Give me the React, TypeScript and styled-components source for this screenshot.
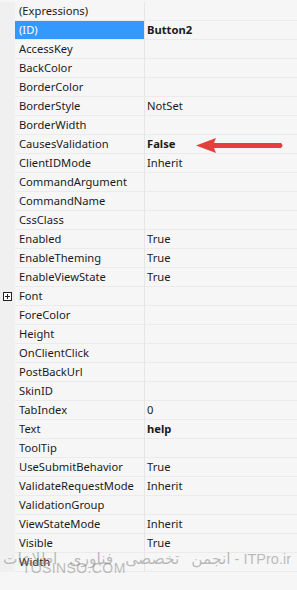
import React from "react";
import styled, { createGlobalStyle } from "styled-components";

const Global = createGlobalStyle`
  html, body { margin: 0; padding: 0; background: #f6f6f6; }
  body { font-family: "Noto Sans", "Liberation Sans", sans-serif; }
`;

const Grid = styled.div`
  position: relative;
  width: 297px;
  height: 590px;
  overflow: hidden;
  background: #f6f6f6;
  padding-top: 2px;
  box-sizing: border-box;
`;

const Row = styled.div`
  display: grid;
  grid-template-columns: 15px 129px 1px 1fr;
  height: 18px;
  border-bottom: 1px solid #ebebeb;
  font-size: 11.2px;
  color: #1b1b1b;
  line-height: 18px;
`;

const Gutter = styled.div`
  background: #f0f0f0;
  display: flex;
  align-items: center;
  justify-content: center;
  margin-bottom: -1px;
`;

const Name = styled.div<{ $selected?: boolean }>`
  padding-left: 4px;
  white-space: nowrap;
  overflow: hidden;
  background: ${(p) => (p.$selected ? "#3399ff" : "transparent")};
  color: ${(p) => (p.$selected ? "#ffffff" : "#1b1b1b")};
`;

const Divider = styled.div`
  background: #e6e6e6;
  margin-bottom: -1px;
`;

const Value = styled.div<{ $bold?: boolean }>`
  padding-left: 2px;
  white-space: nowrap;
  font-weight: ${(p) => (p.$bold ? 700 : 400)};
`;

const Expander = styled.div`
  width: 7px;
  height: 7px;
  border: 1px solid #222;
  position: relative;
  background: #fff;
  margin-right: 1px;
  &::before {
    content: "";
    position: absolute;
    left: 1px;
    right: 1px;
    top: 3px;
    height: 1px;
    background: #222;
  }
  &::after {
    content: "";
    position: absolute;
    top: 1px;
    bottom: 1px;
    left: 3px;
    width: 1px;
    background: #222;
  }
`;

const Arrow = styled.svg`
  position: absolute;
  left: 194px;
  top: 136px;
`;

const Watermark = styled.div`
  position: absolute;
  left: 0;
  right: 6px;
  top: 550px;
  display: flex;
  justify-content: flex-end;
  align-items: baseline;
  overflow: hidden;
  white-space: nowrap;
  font-family: "DejaVu Sans", "Noto Sans", sans-serif;
  color: rgba(125, 125, 125, 0.5);
`;

const Persian = styled.span`
  flex-shrink: 0;
  font-size: 15.5px;
  word-spacing: 7px;
`;

const Latin = styled.span`
  flex-shrink: 0;
  font-family: "Liberation Sans", sans-serif;
  font-size: 14.5px;
`;

const Watermark2 = styled.div`
  position: absolute;
  left: 22px;
  top: 560px;
  font-family: "Liberation Sans", sans-serif;
  font-size: 14px;
  letter-spacing: 0.4px;
  color: rgba(125, 125, 125, 0.5);
`;

type P = { name: string; value?: string; bold?: boolean; selected?: boolean; expand?: boolean };

const rows: P[] = [
  { name: "(Expressions)" },
  { name: "(ID)", value: "Button2", bold: true, selected: true },
  { name: "AccessKey" },
  { name: "BackColor" },
  { name: "BorderColor" },
  { name: "BorderStyle", value: "NotSet" },
  { name: "BorderWidth" },
  { name: "CausesValidation", value: "False", bold: true },
  { name: "ClientIDMode", value: "Inherit" },
  { name: "CommandArgument" },
  { name: "CommandName" },
  { name: "CssClass" },
  { name: "Enabled", value: "True" },
  { name: "EnableTheming", value: "True" },
  { name: "EnableViewState", value: "True" },
  { name: "Font", expand: true },
  { name: "ForeColor" },
  { name: "Height" },
  { name: "OnClientClick" },
  { name: "PostBackUrl" },
  { name: "SkinID" },
  { name: "TabIndex", value: "0" },
  { name: "Text", value: "help", bold: true },
  { name: "ToolTip" },
  { name: "UseSubmitBehavior", value: "True" },
  { name: "ValidateRequestMode", value: "Inherit" },
  { name: "ValidationGroup" },
  { name: "ViewStateMode", value: "Inherit" },
  { name: "Visible", value: "True" },
  { name: "Width" },
];

export default function App() {
  return (
    <>
      <Global />
      <Grid>
        {rows.map((r) => (
          <Row key={r.name}>
            <Gutter>{r.expand && <Expander />}</Gutter>
            <Name $selected={r.selected}>{r.name}</Name>
            <Divider />
            <Value $bold={r.bold}>{r.value ?? ""}</Value>
          </Row>
        ))}
        <Arrow width="92" height="20" viewBox="0 0 92 20">
          <path d="M2 9.5 L22 2 L20 7 L87 7 Q90 9.5 87 12 L20 12 L22 17 Z" fill="#e2403d" />
        </Arrow>
        <Watermark>
          <Persian dir="rtl">انجمن تخصصی فناوری اطلاعات</Persian>
          <Latin>&nbsp;- ITPro.ir</Latin>
        </Watermark>
        <Watermark2>TOSINSO.COM</Watermark2>
      </Grid>
    </>
  );
}
